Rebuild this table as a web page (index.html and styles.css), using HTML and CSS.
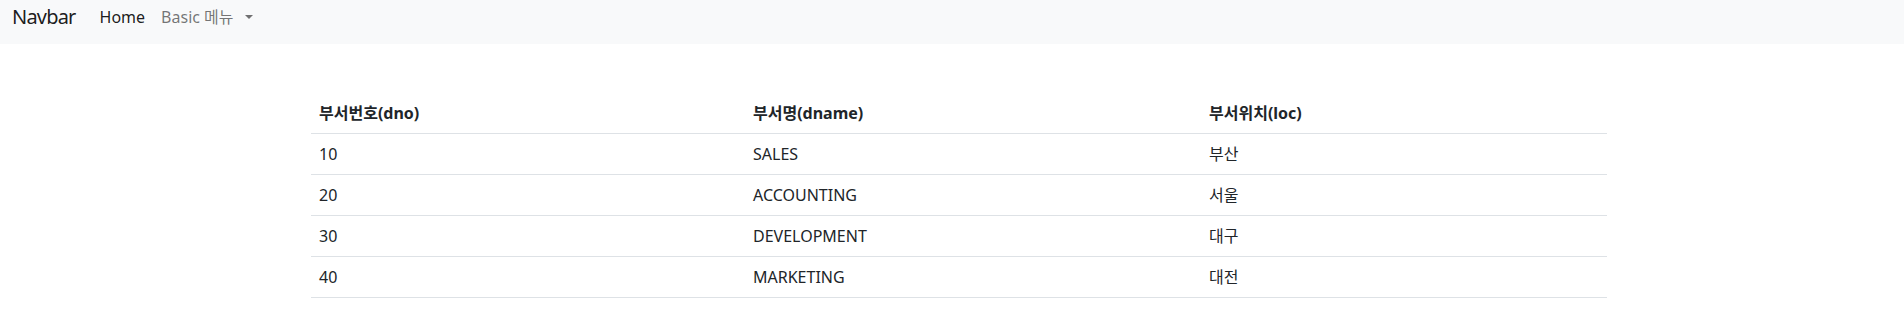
FILE: index.html
```html
<!DOCTYPE html>
<html lang="ko">
<head>
<meta charset="utf-8">
<title>Navbar</title>
<link rel="stylesheet" href="styles.css">
</head>
<body>
<nav class="navbar">
  <a class="brand" href="#">Navbar</a>
  <ul class="nav">
    <li><a class="nav-link active" href="#">Home</a></li>
    <li><a class="nav-link dropdown-toggle" href="#">Basic 메뉴</a></li>
  </ul>
</nav>
<main class="container">
  <table class="table">
    <thead>
      <tr>
        <th class="col-dno">부서번호(dno)</th>
        <th class="col-dname">부서명(dname)</th>
        <th class="col-loc">부서위치(loc)</th>
      </tr>
    </thead>
    <tbody>
      <tr><td>10</td><td>SALES</td><td>부산</td></tr>
      <tr><td>20</td><td>ACCOUNTING</td><td>서울</td></tr>
      <tr><td>30</td><td>DEVELOPMENT</td><td>대구</td></tr>
      <tr><td>40</td><td>MARKETING</td><td>대전</td></tr>
    </tbody>
  </table>
</main>
</body>
</html>
```
FILE: styles.css
```css
* { box-sizing: border-box; }
html, body { margin: 0; padding: 0; }
body {
  font-family: "Noto Sans", "Noto Sans CJK KR", sans-serif;
  font-size: 16px;
  line-height: 1.5;
  color: #212529;
  background: #fff;
}
a { text-decoration: none; }
.navbar {
  display: flex;
  align-items: center;
  height: 44px;
  padding: 2px 12px 12px;
  background: #f8f9fa;
}
.brand {
  font-size: 20px;
  line-height: 30px;
  letter-spacing: -0.8px;
  color: rgba(0,0,0,.9);
  margin-right: 16px;
}
.nav {
  display: flex;
  list-style: none;
  margin: 0;
  padding: 0;
}
.nav-link {
  display: block;
  padding: 0 8px;
  color: rgba(0,0,0,.55);
  line-height: 24px;
}
.nav-link.active { color: rgba(0,0,0,.9); }
.dropdown-toggle::after {
  content: "";
  display: inline-block;
  margin-left: 11px;
  vertical-align: .255em;
  border-top: .3em solid;
  border-right: .3em solid transparent;
  border-left: .3em solid transparent;
  border-bottom: 0;
}
.container {
  width: 1296px;
  margin: 49px 0 0 311px;
}
.table {
  width: 100%;
  border-collapse: collapse;
}
.table th, .table td {
  padding: 8px;
  text-align: left;
  border-bottom: 1px solid #dee2e6;
  vertical-align: top;
}
.table th { font-weight: 700; }
.col-dno { width: 434px; }
.col-dname { width: 456px; }
.col-loc { width: 406px; }
```
